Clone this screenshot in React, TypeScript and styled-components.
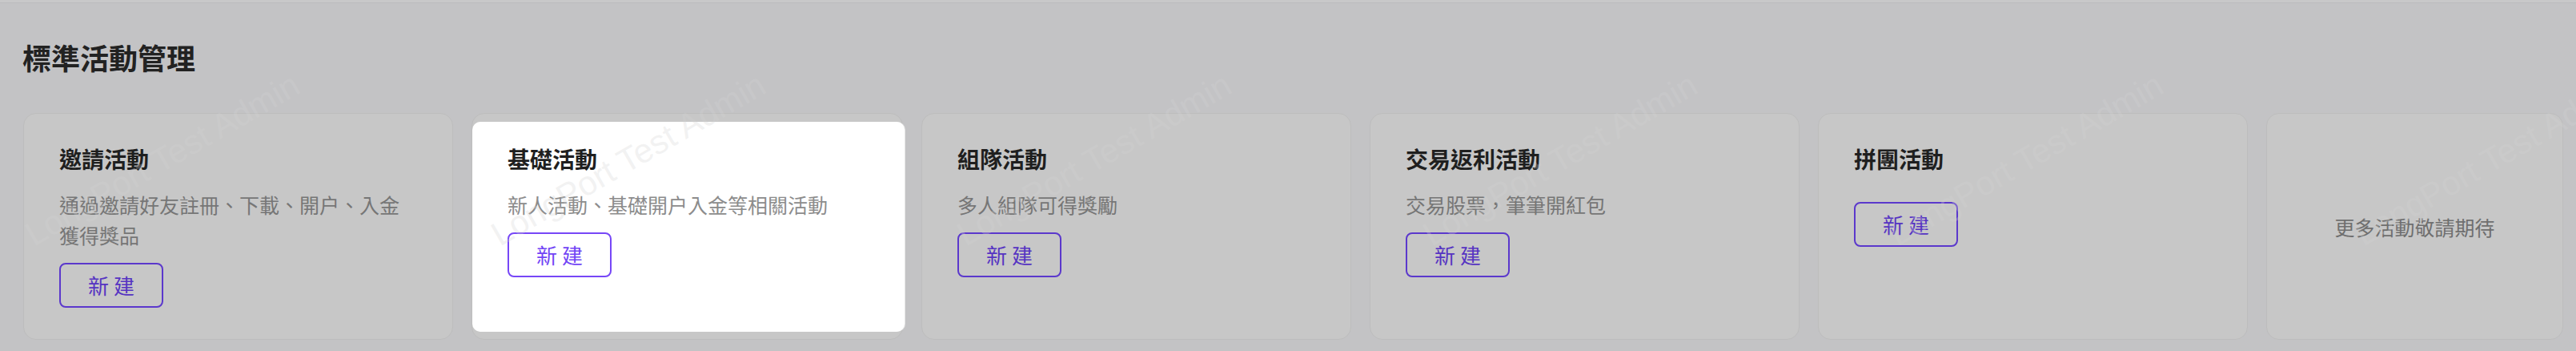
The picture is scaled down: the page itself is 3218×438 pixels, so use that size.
import React from 'react';
import styled, { createGlobalStyle, css } from 'styled-components';

type Activity = {
  id: number;
  title: string;
  desc: string;
  lit?: boolean;
};

const activities: Activity[] = [
  { id: 0, title: '邀請活動', desc: '通過邀請好友註冊、下載、開户、入金獲得獎品' },
  { id: 1, title: '基礎活動', desc: '新人活動、基礎開户入金等相關活動', lit: true },
  { id: 2, title: '組隊活動', desc: '多人組隊可得獎勵' },
  { id: 3, title: '交易返利活動', desc: '交易股票，筆筆開紅包' },
  { id: 4, title: '拼團活動', desc: '' },
];

const WATERMARK_TILES = 6;

const GlobalStyle = createGlobalStyle`
  html, body {
    margin: 0;
    padding: 0;
  }
  body {
    background: #c3c3c5;
    font-family: 'Noto Sans CJK TC', 'Noto Sans', sans-serif;
  }
  * {
    box-sizing: border-box;
  }
`;

const StandardActivity = () => {
  return (
    <S.Page>
      <GlobalStyle />
      <S.TopBar />
      <S.Section>
        <S.Heading>標準活動管理</S.Heading>
        <S.CardRow>
          {activities.map((item) => (
            <S.Card key={item.id}>
              {item.lit && <S.Spotlight />}
              <S.CardBody>
                <S.CardTitle>{item.title}</S.CardTitle>
                <S.CardDesc $lit={item.lit}>{item.desc}</S.CardDesc>
                <S.NewButton $lit={item.lit}>新 建</S.NewButton>
              </S.CardBody>
            </S.Card>
          ))}
          <S.Card $center>
            <S.ComingSoon>更多活動敬請期待</S.ComingSoon>
          </S.Card>
        </S.CardRow>
      </S.Section>
      <S.Watermark>
        {Array.from({ length: WATERMARK_TILES }).map((_, i) => (
          <S.MarkTile key={i}>
            <span>LongPort Test Admin</span>
          </S.MarkTile>
        ))}
      </S.Watermark>
    </S.Page>
  );
};

const S = {
  Page: styled.div`
    position: relative;
    width: 3218px;
    height: 438px;
    overflow: hidden;
    background: #c3c3c5;
  `,
  TopBar: styled.div`
    height: 4px;
    background: #c8c8c9;
    border-bottom: 1px solid #bcbcbe;
  `,
  Section: styled.div`
    padding: 42px 0 0 28px;
  `,
  Heading: styled.h1`
    margin: 0 0 45px;
    font-size: 36px;
    line-height: 50px;
    font-weight: 700;
    color: #222222;
  `,
  CardRow: styled.div`
    display: grid;
    grid-template-columns: 537px 539px repeat(3, 537px) 371px;
    column-gap: 23px;
    padding-left: 1px;
  `,
  Card: styled.div<{ $center?: boolean }>`
    position: relative;
    height: 283px;
    background: #c7c7c7;
    border: 1px solid #bdbdbd;
    border-radius: 16px;
    padding: 36px 44px;
    ${(p) =>
      p.$center &&
      css`
        display: flex;
        align-items: center;
        justify-content: center;
        padding: 0;
      `}
  `,
  Spotlight: styled.div`
    position: absolute;
    top: 10px;
    bottom: 9px;
    left: 0;
    right: -3px;
    background: #ffffff;
    border-radius: 10px;
    box-shadow: 1px 0 0 #e6e6e6;
  `,
  CardBody: styled.div`
    position: relative;
    display: flex;
    flex-direction: column;
    align-items: flex-start;
  `,
  CardTitle: styled.div`
    font-size: 28px;
    line-height: 40px;
    font-weight: 700;
    color: #1f1f1f;
    margin-bottom: 18px;
  `,
  CardDesc: styled.div<{ $lit?: boolean }>`
    font-size: 25px;
    line-height: 38px;
    color: ${(p) => (p.$lit ? '#8c8c8c' : '#767676')};
    margin-bottom: 16px;
  `,
  NewButton: styled.button<{ $lit?: boolean }>`
    width: 130px;
    height: 56px;
    padding: 0;
    background: transparent;
    border: 2px solid ${(p) => (p.$lit ? '#7747f7' : '#5b38cc')};
    border-radius: 8px;
    color: ${(p) => (p.$lit ? '#7245f5' : '#5634c2')};
    font-family: 'Noto Sans CJK TC', 'Noto Sans', sans-serif;
    font-size: 26px;
    line-height: 1;
    cursor: pointer;
  `,
  ComingSoon: styled.div`
    font-size: 25px;
    line-height: 38px;
    color: #6f6f6f;
  `,
  Watermark: styled.div`
    position: absolute;
    inset: 0;
    display: flex;
    pointer-events: none;
  `,
  MarkTile: styled.div`
    flex: 0 0 582px;
    padding: 272px 0 0 46px;
    span {
      display: inline-block;
      white-space: nowrap;
      font-family: 'Liberation Sans', Arial, sans-serif;
      font-size: 42px;
      line-height: 42px;
      color: rgba(212, 212, 212, 0.3);
      transform-origin: 0 100%;
      transform: rotate(-30deg);
    }
  `,
};

export default StandardActivity;
